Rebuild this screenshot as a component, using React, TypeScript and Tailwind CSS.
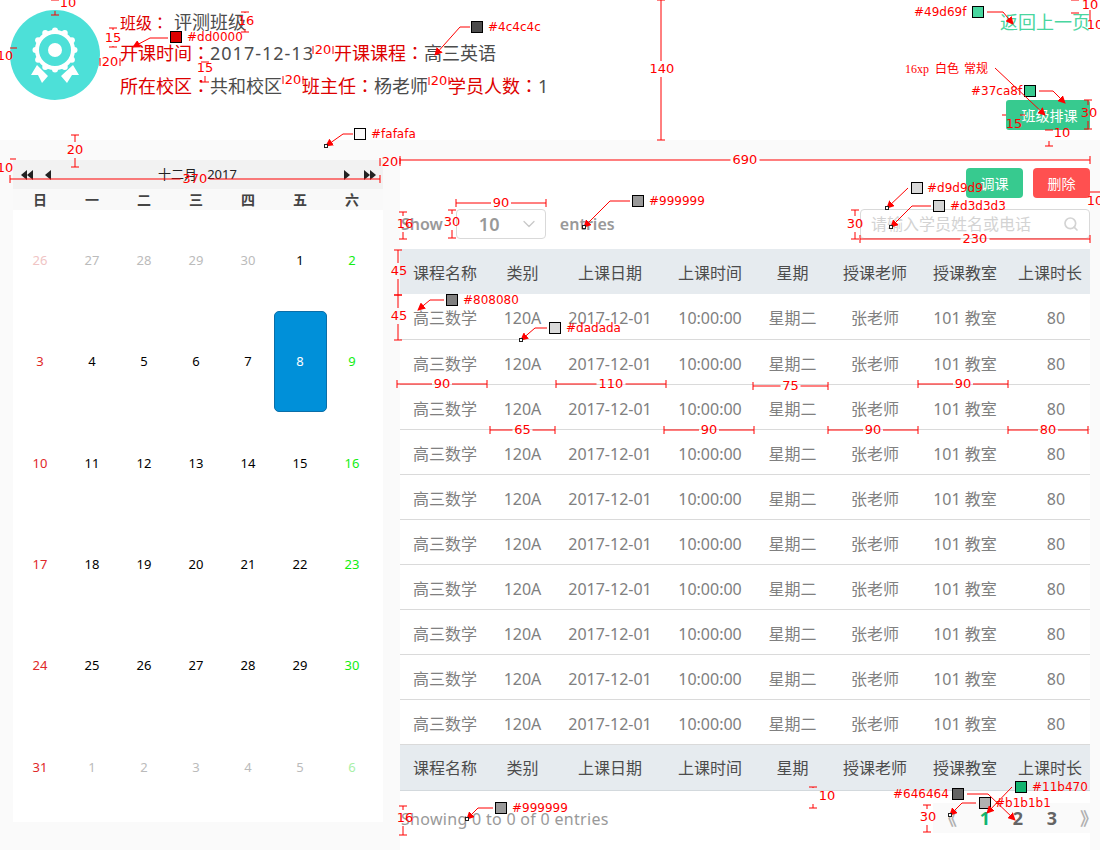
import React from 'react';
import { Search, ChevronDown } from 'lucide-react';

const FONT = "font-['Noto_Sans','Noto_Sans_CJK_SC',sans-serif]";

const columns = [
  { name: '课程名称', width: 'w-[90px]', value: '高三数学' },
  { name: '类别', width: 'w-[65px]', value: '120A' },
  { name: '上课日期', width: 'w-[110px]', value: '2017-12-01' },
  { name: '上课时间', width: 'w-[90px]', value: '10:00:00' },
  { name: '星期', width: 'w-[75px]', value: '星期二' },
  { name: '授课老师', width: 'w-[90px]', value: '张老师' },
  { name: '授课教室', width: 'w-[90px]', value: '101 教室' },
  { name: '上课时长', width: 'w-[80px]', value: '80' },
];

const weekdays = ['日', '一', '二', '三', '四', '五', '六'];

const days: { d: number; c: string }[][] = [
  [
    { d: 26, c: 'text-[#f0c4c4]' },
    { d: 27, c: 'text-[#bbbbbb]' },
    { d: 28, c: 'text-[#bbbbbb]' },
    { d: 29, c: 'text-[#bbbbbb]' },
    { d: 30, c: 'text-[#bbbbbb]' },
    { d: 1, c: 'text-black' },
    { d: 2, c: 'text-[#11ee11]' },
  ],
  [
    { d: 3, c: 'text-[#e02828]' },
    { d: 4, c: 'text-black' },
    { d: 5, c: 'text-black' },
    { d: 6, c: 'text-black' },
    { d: 7, c: 'text-black' },
    { d: 8, c: 'text-white' },
    { d: 9, c: 'text-[#11ee11]' },
  ],
  [
    { d: 10, c: 'text-[#e02828]' },
    { d: 11, c: 'text-black' },
    { d: 12, c: 'text-black' },
    { d: 13, c: 'text-black' },
    { d: 14, c: 'text-black' },
    { d: 15, c: 'text-black' },
    { d: 16, c: 'text-[#11ee11]' },
  ],
  [
    { d: 17, c: 'text-[#e02828]' },
    { d: 18, c: 'text-black' },
    { d: 19, c: 'text-black' },
    { d: 20, c: 'text-black' },
    { d: 21, c: 'text-black' },
    { d: 22, c: 'text-black' },
    { d: 23, c: 'text-[#11ee11]' },
  ],
  [
    { d: 24, c: 'text-[#e02828]' },
    { d: 25, c: 'text-black' },
    { d: 26, c: 'text-black' },
    { d: 27, c: 'text-black' },
    { d: 28, c: 'text-black' },
    { d: 29, c: 'text-black' },
    { d: 30, c: 'text-[#11ee11]' },
  ],
  [
    { d: 31, c: 'text-[#e02828]' },
    { d: 1, c: 'text-[#bbbbbb]' },
    { d: 2, c: 'text-[#bbbbbb]' },
    { d: 3, c: 'text-[#bbbbbb]' },
    { d: 4, c: 'text-[#bbbbbb]' },
    { d: 5, c: 'text-[#bbbbbb]' },
    { d: 6, c: 'text-[#a8f0a8]' },
  ],
];

// redline marks drawn over the page: [x1, x2, y, label, label x]
const hDims: [number, number, number, string, number?][] = [
  [100, 120, 62, '20'],
  [313, 333, 50, '20'],
  [283, 303, 80, '20'],
  [429, 449, 81, '20'],
  [10, 380, 179, '370', 195],
  [380, 400, 162, '20'],
  [400, 1090, 160, '690', 745],
  [860, 1090, 239, '230', 975],
  [456, 546, 203, '90'],
  [397, 487, 384, '90'],
  [556, 666, 384, '110'],
  [753, 828, 386, '75'],
  [918, 1008, 384, '90'],
  [490, 555, 430, '65'],
  [664, 754, 430, '90'],
  [828, 918, 430, '90'],
  [1008, 1088, 430, '80'],
];

// [x, y1, y2, label, label x, label y]
const vDims: [number, number, number, string, number, number][] = [
  [55, 0, 15, '10', 68, 3],
  [113, 28, 47, '15', 113, 38],
  [245, 12, 32, '16', 246, 21],
  [205, 62, 82, '15', 205, 68],
  [75, 135, 167, '20', 75, 150],
  [661, 0, 140, '140', 662, 69],
  [1075, 0, 13, '10', 1090, 5],
  [1088, 100, 129, '30', 1089, 113],
  [1049, 130, 146, '10', 1062, 133],
  [855, 210, 239, '30', 855, 224],
  [403, 212, 239, '16', 405, 224],
  [452, 210, 238, '30', 452, 222],
  [398, 250, 295, '45', 399, 271],
  [398, 295, 340, '45', 399, 316],
  [403, 806, 835, '16', 405, 818],
  [813, 787, 808, '10', 827, 796],
  [927, 805, 832, '30', 928, 817],
];

const swatches: { x: number; y: number; color: string; label: string; lx: number; path: string }[] = [
  { x: 176, y: 37, color: '#dd0000', label: '#dd0000', lx: 187, path: 'M168 38H150L133 47' },
  { x: 477, y: 27, color: '#4c4c4c', label: '#4c4c4c', lx: 488, path: 'M470 27H460L435 55' },
  { x: 360, y: 134, color: '#fafafa', label: '#fafafa', lx: 371, path: 'M353 134H343L326 146' },
  { x: 978, y: 12, color: '#49d69f', label: '#49d69f', lx: 914, path: 'M987 12H1003L1013 24' },
  { x: 1030, y: 91, color: '#37ca8f', label: '#37ca8f', lx: 971, path: 'M1039 91H1053L1065 103' },
  { x: 917, y: 188, color: '#d9d9d9', label: '#d9d9d9', lx: 927, path: 'M908 188L887 208' },
  { x: 939, y: 206, color: '#d3d3d3', label: '#d3d3d3', lx: 950, path: 'M931 206H912L891 227' },
  { x: 638, y: 201, color: '#999999', label: '#999999', lx: 649, path: 'M630 201H610L584 227' },
  { x: 452, y: 300, color: '#808080', label: '#808080', lx: 463, path: 'M444 300H430L418 310' },
  { x: 555, y: 328, color: '#dadada', label: '#dadada', lx: 566, path: 'M547 328H535L521 340' },
  { x: 501, y: 808, color: '#999999', label: '#999999', lx: 512, path: 'M493 808H478L467 819' },
  { x: 958, y: 794, color: '#646464', label: '#646464', lx: 893, path: 'M967 794H988L1015 820' },
  { x: 985, y: 803, color: '#b1b1b1', label: '#b1b1b1', lx: 995, path: 'M976 803H962L950 815' },
  { x: 1021, y: 787, color: '#11b470', label: '#11b470', lx: 1032, path: 'M1012 787L987 813' },
];

// little sample squares at the arrow tips
const samples = [
  [326, 146], [887, 208], [891, 227], [584, 227], [521, 340], [467, 819], [950, 815],
];

const Redlines = () => (
  <svg
    className="absolute left-0 top-0 w-[1100px] h-[850px] pointer-events-none font-['DejaVu_Sans',sans-serif]"
    viewBox="0 0 1100 850"
  >
    <defs>
      <marker id="arrow" viewBox="0 0 8 8" refX="7" refY="4" markerWidth="8" markerHeight="8" orient="auto">
        <path d="M0 0L8 4L0 8Z" fill="#ff0000" />
      </marker>
    </defs>
    {hDims.map(([x1, x2, y, label, lx], i) => {
      const mid = lx ?? (x1 + x2) / 2;
      const half = label.length * 4.5 + 1;
      return (
        <g key={i} stroke="#ff0000" fill="none">
          <path d={`M${x1} ${y - 4}V${y + 4}M${x2} ${y - 4}V${y + 4}M${x1} ${y}H${mid - half}M${mid + half} ${y}H${x2}`} />
          <text x={mid} y={y + 4} textAnchor="middle" fontSize="13" fill="#ff0000" stroke="none">{label}</text>
        </g>
      );
    })}
    {vDims.map(([x, y1, y2, label, lx, ly], i) => (
      <g key={i} stroke="#ff0000" fill="none">
        <path d={`M${x - 4} ${y1}H${x + 4}M${x - 4} ${y2}H${x + 4}M${x} ${y1}V${Math.max(y1, ly - 8)}M${x} ${Math.min(y2, ly + 8)}V${y2}`} />
        <text x={lx} y={ly + 4} textAnchor="middle" fontSize="13" fill="#ff0000" stroke="none">{label}</text>
      </g>
    ))}
    {swatches.map((s, i) => (
      <g key={i}>
        <path d={s.path} stroke="#ff0000" fill="none" markerEnd="url(#arrow)" />
        <rect x={s.x - 5.5} y={s.y - 5.5} width="11" height="11" fill={s.color} stroke="#000000" />
        <text x={s.lx} y={s.y + 4} fontSize="12" fill="#ff0000">{s.label}</text>
      </g>
    ))}
    {samples.map(([x, y], i) => (
      <rect key={i} x={x - 1.5} y={y - 1.5} width="3" height="3" fill="#ffffff" stroke="#222222" />
    ))}
    <g stroke="#ff0000" fill="none">
      <path d="M995 68L1045 115" markerEnd="url(#arrow)" />
      <path d="M1090 10V20M1002 115H1006M1020 115H1025M1090 192H1100M10 48H17M10 159H16" />
    </g>
    <g fontSize="12" fill="#ff0000" className="font-['Liberation_Serif','Noto_Sans_CJK_SC',serif]">
      <text x="905" y="73">16xp</text>
      <text x="935" y="73">白色</text>
      <text x="964" y="73">常规</text>
    </g>
    <g fontSize="13" fill="#ff0000">
      <text x="5" y="60" textAnchor="middle">10</text>
      <text x="5" y="172" textAnchor="middle">10</text>
      <text x="1095" y="29" textAnchor="middle">10</text>
      <text x="1014" y="128" textAnchor="middle">15</text>
      <text x="1095" y="205" textAnchor="middle">10</text>
    </g>
  </svg>
);

const NavArrow = ({ dir, double }: { dir: 'left' | 'right'; double?: boolean }) => (
  <svg width={double ? 12 : 6} height="10" viewBox={double ? '0 0 12 10' : '0 0 6 10'} fill="#222222">
    {dir === 'left' ? (
      <>
        <path d="M6 0V10L0 5Z" />
        {double && <path d="M12 0V10L6 5Z" />}
      </>
    ) : (
      <>
        <path d="M0 0V10L6 5Z" />
        {double && <path d="M6 0V10L12 5Z" />}
      </>
    )}
  </svg>
);

const Calendar = () => (
  <div className="w-[370px] ml-[13px] mt-5 h-[662px] flex flex-col bg-white">
    <div className="h-[29px] bg-[#f2f2f2] flex items-center pl-[8px] pr-[7px]">
      <NavArrow dir="left" double />
      <span className="ml-[12px]"><NavArrow dir="left" /></span>
      <span className="flex-1 flex justify-center gap-[10px] text-[13px] text-[#222222]">
        <span>十二月</span>
        <span>2017</span>
      </span>
      <NavArrow dir="right" />
      <span className="ml-[14px]"><NavArrow dir="right" double /></span>
    </div>
    <div className="h-[21px] bg-[#f9f9f9] grid grid-cols-[repeat(7,52px)] pl-px items-center">
      {weekdays.map((w) => (
        <span key={w} className="text-center text-[14px] font-bold text-[#444444]">{w}</span>
      ))}
    </div>
    <div className="h-[608px] w-[364px] ml-px grid grid-cols-7 grid-rows-6">
      {days.flat().map((cell, i) => (
        <div key={i} className="flex items-center justify-center">
          {cell.d === 8 ? (
            <span className="w-[53px] h-[101px] shrink-0 flex items-center justify-center rounded-[5px] bg-[#0090d9] border border-[#0a6ea8] text-white text-[13px]">
              8
            </span>
          ) : (
            <span className={`text-[13px] ${cell.c}`}>{cell.d}</span>
          )}
        </div>
      ))}
    </div>
  </div>
);

const HeadRow = ({ foot }: { foot?: boolean }) => (
  <tr className={`bg-[#e6ebef] ${foot ? 'h-[46px] border-y border-[#d3d9dd]' : 'h-[45px]'}`}>
    {columns.map((c) => (
      <th key={c.name} className={`font-normal text-[16px] text-[#4c4c4c] text-center p-0 ${foot ? 'pt-px' : 'pt-[3px]'}`}>{c.name}</th>
    ))}
  </tr>
);

const CourseTable = () => (
  <table className="w-[690px] table-fixed border-collapse">
    <colgroup>
      {columns.map((c) => <col key={c.name} className={c.width} />)}
    </colgroup>
    <thead><HeadRow /></thead>
    <tbody>
      {Array.from({ length: 10 }).map((_, i) => (
        <tr key={i} className="h-[45px] border-b border-[#dadada]">
          {columns.map((c) => (
            <td key={c.name} className={`text-[16px] text-[#808080] text-center p-0 pt-[4px] ${c.value === '80' ? 'pl-3' : ''}`}>{c.value}</td>
          ))}
        </tr>
      ))}
    </tbody>
    <tfoot><HeadRow foot /></tfoot>
  </table>
);

// fullwidth colon sits centred in its cell in the reference
const Colon = () => <span className="font-['Noto_Sans_CJK_TC',sans-serif]">：</span>;

const Label = ({ children }: { children: React.ReactNode }) => (
  <span className="text-[#dd0000]">{children}<Colon /></span>
);

const Logo = () => (
  <div className="w-[90px] h-[90px] ml-[10px] mt-[10px] rounded-full bg-[#4de0d8] shrink-0">
    <svg width="90" height="90" viewBox="0 0 90 90" fill="#ffffff">
      <circle cx="45" cy="40" r="18" fill="none" stroke="#ffffff" strokeWidth="4" />
      {Array.from({ length: 12 }).map((_, i) => {
        const a = (i * Math.PI) / 6;
        return <circle key={i} cx={45 + 19.5 * Math.cos(a)} cy={40 + 19.5 * Math.sin(a)} r="3" />;
      })}
      <circle cx="45" cy="40" r="7" />
      <path d="M21 65L27 55L38 66L32 73L28 65Z" />
      <path d="M51 66L63 55L69 65L62 65L57 73Z" />
    </svg>
  </div>
);

const App = () => {
  return (
    <div className={`relative w-[1100px] h-[850px] overflow-hidden bg-white ${FONT}`}>
      <header className="h-[140px] flex items-start">
        <Logo />
        <div className="ml-5 pt-[10px] text-[#4c4c4c]">
          <p className="text-[18px] leading-6">
            <span className="text-[16px]"><Label>班级</Label></span>
            <span className="ml-[6px]">评测班级</span>
          </p>
          <p className="text-[18px] leading-6 mt-[5px] flex gap-5">
            <span><Label>开课时间</Label><span className="tracking-[1px]">2017-12-13</span></span>
            <span><Label>开课课程</Label>高三英语</span>
          </p>
          <p className="text-[18px] leading-6 mt-[8px] flex gap-5">
            <span><Label>所在校区</Label>共和校区</span>
            <span><Label>班主任</Label>杨老师</span>
            <span><Label>学员人数</Label>1</span>
          </p>
        </div>
        <div className="ml-auto mr-[10px] flex flex-col items-end">
          <a className="mt-[10px] text-[18px] leading-6 text-[#49d69f]">返回上一页</a>
          <button className="mt-[66px] w-[84px] h-[30px] pl-[3px] rounded-[3px] bg-[#37ca8f] text-white text-[14px]">班级排课</button>
        </div>
      </header>

      <main className="h-[710px] bg-[#fafafa] flex">
        <Calendar />
        <section className="ml-[17px] w-[690px] bg-white mt-5 flex flex-col">
          <div className="flex justify-end gap-[10px] mt-2">
            <button className="w-[57px] h-[30px] rounded-[4px] bg-[#37ca8f] text-white text-[14px]">调课</button>
            <button className="w-[57px] h-[30px] rounded-[4px] bg-[#ff5050] text-white text-[14px]">删除</button>
          </div>
          <div className="flex items-center mt-[11px] h-[30px] pl-px text-[#999999] text-[16px] font-semibold">
            <span>Show</span>
            <div className="ml-[13px] w-[90px] h-[30px] rounded-[4px] border border-[#d9d9d9] flex items-center justify-between pl-[22px] pr-[6px]">
              <span className="text-[18px]">10</span>
              <ChevronDown size={20} className="text-[#c8c8c8]" strokeWidth={1.5} />
            </div>
            <span className="ml-[14px]">entries</span>
            <div className="ml-auto w-[230px] h-[30px] rounded-[4px] border border-[#d9d9d9] flex items-center justify-between pl-[10px] pr-[10px] font-normal">
              <span className="text-[#d3d3d3] text-[16px]">请输入学员姓名或电话</span>
              <Search size={16} className="text-[#d3d3d3]" strokeWidth={2.5} />
            </div>
          </div>
          <div className="mt-[10px]">
            <CourseTable />
          </div>
          <div className="flex items-center justify-between mt-3 pl-px">
            <span className="text-[16px] text-[#999999] tracking-[0.3px] pt-[2px]">Showing 0 to 0 of 0 entries</span>
            <div className="w-[157px] h-[30px] bg-[#fafafa] flex items-center text-[18px] font-bold text-[#646464] pt-[2px]">
              <span className="w-[30px] shrink-0 text-center text-[#b1b1b1]">《</span>
              <span className="ml-[7px] w-[30px] shrink-0 text-center text-[#11b470]">1</span>
              <span className="w-[36px] shrink-0 text-center">2</span>
              <span className="w-[32px] shrink-0 text-center">3</span>
              <span className="w-[30px] shrink-0 text-right text-[#b1b1b1]">》</span>
            </div>
          </div>
        </section>
      </main>

      <Redlines />
    </div>
  );
};

export default App;
